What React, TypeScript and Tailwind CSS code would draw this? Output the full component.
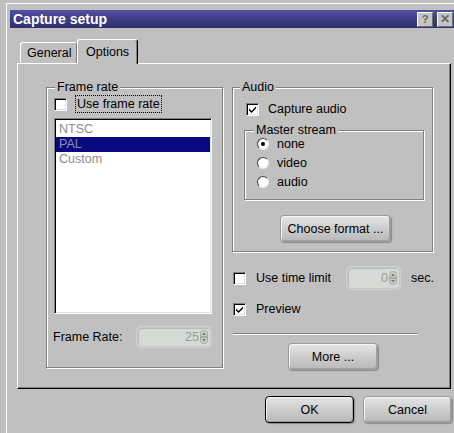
import React from "react";

function Check({ checked }: { checked?: boolean }) {
  return (
    <div className="w-[13px] h-[13px] shrink-0 bg-white border border-t-[#808080] border-l-[#808080] border-r-white border-b-white shadow-[inset_1px_1px_0_#000,inset_-1px_-1px_0_#dfdfdf] flex items-center justify-center">
      {checked && (
        <svg width="9" height="9" viewBox="0 0 9 9">
          <path d="M1 3.5 L3.5 6 L8 1.5 L8 3.5 L3.5 8 L1 5.5 Z" fill="#000" />
        </svg>
      )}
    </div>
  );
}

function Radio({ on }: { on?: boolean }) {
  return (
    <div className="w-[12px] h-[12px] shrink-0 rounded-full bg-white border border-t-[#404040] border-l-[#404040] border-r-[#e8e8e8] border-b-[#e8e8e8] flex items-center justify-center">
      {on && <div className="w-[4px] h-[4px] rounded-full bg-black" />}
    </div>
  );
}

function Group({
  label,
  labelLeft,
  className,
  children,
}: {
  label: string;
  labelLeft: string;
  className: string;
  children?: React.ReactNode;
}) {
  return (
    <div
      className={`relative shrink-0 border border-[#808080] shadow-[inset_1px_1px_0_#fff,1px_1px_0_#fff] ${className}`}
    >
      <span
        className={`absolute -top-[8px] ${labelLeft} bg-[#c0c0c0] px-[2px] leading-[14px]`}
      >
        {label}
      </span>
      {children}
    </div>
  );
}

function Button({
  children,
  className,
  isDefault,
}: {
  children: React.ReactNode;
  className: string;
  isDefault?: boolean;
}) {
  return (
    <button
      type="button"
      className={`shrink-0 h-[27px] rounded-[4px] border ${
        isDefault ? "border-black" : "border-[#9a9a9a]"
      } bg-[linear-gradient(to_bottom,#e6e6e6,#cfcfcf_45%,#b9b9b9)] shadow-[inset_1px_1px_0_#f6f6f6,inset_-1px_-1px_0_#a0a0a0,1px_1px_1px_#8a8a8a] flex items-center justify-center text-black leading-[14px] ${className}`}
    >
      {children}
    </button>
  );
}

function Spin({ value, className }: { value: string; className: string }) {
  return (
    <div
      className={`shrink-0 rounded-[4px] bg-[#d6dad6] border border-[#c4c8c4] shadow-[inset_1px_1px_0_#b8bcb8,0_0_0_1px_#cfd0cf] flex items-center justify-end pr-[2px] ${className}`}
    >
      <span className="text-[#9a9a9a] leading-[14px] mr-[1px]">{value}</span>
      <svg width="8" height="14" viewBox="0 0 8 14">
        <rect x="0.5" y="0.5" width="7" height="13" rx="3" fill="#c8ccc8" stroke="#a8aca8" />
        <path d="M4 2.5 L6 5 L2 5 Z" fill="#7a7a7a" />
        <line x1="1" y1="7" x2="7" y2="7" stroke="#8a8a8a" />
        <path d="M2 9 L6 9 L4 11.5 Z" fill="#7a7a7a" />
      </svg>
    </div>
  );
}

export default function App() {
  return (
    <div className="w-[454px] h-[433px] overflow-hidden bg-[#c0c0c0] font-['Liberation_Sans',Arial,sans-serif] text-[12.5px] text-black">
      <div className="ml-[6px] mt-[3px] w-[470px] h-[450px] border-t border-l border-white pt-[6px] pl-[3px]">
        {/* title bar */}
        <div className="w-[445px] h-[18px] bg-[linear-gradient(to_bottom,#5252a2,#3d3d88_45%,#30306e)] flex items-center pl-[3px] pr-[2px]">
          <span className="text-white font-bold text-[14px] leading-[16px]">Capture setup</span>
          <div className="ml-auto flex gap-[4px]">
            <div className="w-[16px] h-[15px] bg-[#c4c4c4] border border-t-white border-l-white border-r-[#707070] border-b-[#707070] flex items-center justify-center text-[#666] font-bold text-[11px] leading-[11px]">
              ?
            </div>
            <div className="w-[16px] h-[15px] bg-[#c4c4c4] border border-t-white border-l-white border-r-[#707070] border-b-[#707070] flex items-center justify-center text-[#666] font-bold text-[12px] leading-[11px]">
              ✕
            </div>
          </div>
        </div>

        {/* tabs */}
        <div className="mt-[11px] ml-[10px] h-[24px] flex items-end">
          <div className="w-[57px] h-[21px] rounded-t-[3px] border-t border-l border-r border-t-white border-l-white border-r-[#808080] pl-[6px] flex items-center">
            General
          </div>
          <div className="relative z-10 -mb-[1px] w-[61px] h-[25px] rounded-t-[3px] bg-[#c0c0c0] border-t border-l border-r border-t-white border-l-white border-r-black shadow-[inset_-1px_0_0_#808080] pl-[8px] pt-[3px]">
            <span className="leading-[14px]">Options</span>
          </div>
        </div>

        {/* tab page */}
        <div className="ml-[7px] w-[434px] h-[326px] border border-t-white border-l-white border-r-black border-b-black shadow-[inset_-1px_-1px_0_#808080] flex items-start pl-[28px] pt-[23px]">
          <Group label="Frame rate" labelLeft="left-[8px]" className="w-[177px] h-[281px]">
            <div className="mt-[7px] ml-[7px] h-[18px] flex items-center">
              <Check />
              <span className="ml-[8px] h-[18px] border border-dotted border-black px-[1px] flex items-center leading-[14px]">
                Use frame rate
              </span>
            </div>
            <div className="mt-[5px] ml-[7px] w-[158px] h-[196px] bg-white border border-t-[#808080] border-l-[#808080] border-r-white border-b-white shadow-[inset_1px_1px_0_#000,inset_-1px_-1px_0_#dfdfdf] pt-[3px] px-[1px]">
              <div className="h-[15px] pl-[3px] leading-[15px] text-[#8c8c8c]">NTSC</div>
              <div className="h-[15px] pl-[3px] leading-[15px] bg-[#0a0a80] text-[#8e8eb4]">PAL</div>
              <div className="h-[15px] pl-[3px] leading-[15px] text-[#8c8c8c]">Custom</div>
            </div>
            <div className="mt-[13px] ml-[6px] flex items-center">
              <span className="w-[84px] leading-[14px]">Frame Rate:</span>
              <Spin value="25" className="w-[74px] h-[20px]" />
            </div>
          </Group>

          <div className="ml-[9px] flex flex-col">
            <Group label="Audio" labelLeft="left-[7px]" className="w-[201px] h-[165px]">
              <div className="mt-[13px] ml-[13px] h-[16px] flex items-center">
                <Check checked />
                <span className="ml-[9px] leading-[14px]">Capture audio</span>
              </div>
              <Group label="Master stream" labelLeft="left-[9px]" className="mt-[13px] ml-[11px] w-[180px] h-[70px]">
                <div className="pt-[3px] pl-[12px]">
                  {[
                    ["none", true],
                    ["video", false],
                    ["audio", false],
                  ].map(([t, on]) => (
                    <div key={t as string} className="h-[19px] flex items-center">
                      <Radio on={on as boolean} />
                      <span className="ml-[8px] leading-[14px]">{t as string}</span>
                    </div>
                  ))}
                </div>
              </Group>
              <Button className="mt-[15px] ml-[47px] w-[111px]">Choose format ...</Button>
            </Group>

            <div className="mt-[15px] ml-[1px] h-[22px] flex items-center">
              <Check />
              <span className="ml-[10px] w-[91px] leading-[14px]">Use time limit</span>
              <Spin value="0" className="w-[53px] h-[22px]" />
              <span className="ml-[11px] leading-[14px]">sec.</span>
            </div>
            <div className="mt-[13px] ml-[1px] h-[14px] flex items-center">
              <Check checked />
              <span className="ml-[10px] leading-[14px]">Preview</span>
            </div>
            <div className="mt-[17px] ml-[1px] w-[185px] h-[2px] border-t border-b border-t-[#808080] border-b-white" />
            <Button className="mt-[8px] ml-[56px] w-[90px]">More ...</Button>
          </div>
        </div>

        {/* dialog buttons */}
        <div className="mt-[7px] ml-[255px] flex gap-[9px]">
          <Button isDefault className="w-[89px]">OK</Button>
          <Button className="w-[89px]">Cancel</Button>
        </div>
      </div>
    </div>
  );
}
